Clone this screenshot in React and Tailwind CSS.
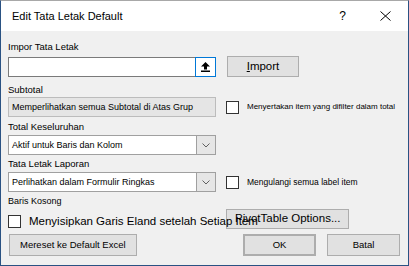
const Label = ({ children, className = "" }) => (
  <div className={`leading-[12px] text-[9.5px] ${className}`}>{children}</div>
);

const Checkbox = ({ className = "" }) => (
  <div className={`w-[13px] h-[13px] shrink-0 border border-[#333333] bg-white ${className}`} />
);

const Chevron = () => (
  <svg width="8" height="5" viewBox="0 0 8 5" fill="none">
    <path d="M0.5 0.5 L4 4 L7.5 0.5" stroke="#606060" strokeWidth="1" />
  </svg>
);

const Combo = ({ text, disabled }) => (
  <div
    className={`flex h-[20px] w-[208px] border ${
      disabled ? "border-[#bcbcbc] bg-[#e5e5e5]" : "border-[#a0a0a0] bg-white"
    }`}
  >
    <div className="flex-1 pl-[3px] flex items-center text-[9px] leading-none whitespace-nowrap overflow-hidden">
      {text}
    </div>
    <div
      className={`w-[19px] flex items-center justify-center ${
        disabled ? "bg-[#e5e5e5]" : "bg-[#e6e6e6] border-l border-[#a0a0a0]"
      }`}
    >
      {!disabled && <Chevron />}
    </div>
  </div>
);

const Button = ({ children, className = "" }) => (
  <button
    className={`bg-[#e1e1e1] border border-[#adadad] flex items-center justify-center leading-none text-black ${className}`}
  >
    {children}
  </button>
);

export default function App() {
  return (
    <div
      className="w-[409px] h-[266px] border border-[#2a5283] border-t-[#a8a8a8] bg-[#f0f0f0] flex flex-col text-black"
      style={{ fontFamily: '"Liberation Sans", Arial, sans-serif' }}
    >
      {/* title bar */}
      <div className="h-[30px] bg-white flex items-center pl-[11px]">
        <span className="text-[11px] leading-none">Edit Tata Letak Default</span>
        <span className="ml-auto text-[12px] leading-none mr-[34px]">?</span>
        <svg width="11" height="10" viewBox="0 0 11 10" className="mr-[17px]">
          <path d="M0.5 0.5 L10.5 9.5 M10.5 0.5 L0.5 9.5" stroke="#000" strokeWidth="1" />
        </svg>
      </div>

      {/* body */}
      <div className="flex flex-col pl-[7px]">
        <Label className="h-[26px] pt-[10px]">Impor Tata Letak</Label>
        <div className="flex items-start h-[20px]">
          <div className="flex w-[208px] h-[20px]">
            <div className="flex-1 bg-white border border-[#7a7a7a] border-r-0" />
            <div className="w-[21px] bg-white border border-[#0078d7] flex items-center justify-center">
              <svg width="9" height="10" viewBox="0 0 9 10">
                <path d="M4.5 0 L9 4.5 L6 4.5 L6 7.5 L3 7.5 L3 4.5 L0 4.5 Z" fill="#000" />
                <rect x="0" y="8.5" width="9" height="1.5" fill="#000" />
              </svg>
            </div>
          </div>
          <Button className="ml-[11px] -mt-px w-[72px] h-[21px] text-[11.5px]">
            <span className="underline">I</span>mport
          </Button>
        </div>

        <Label className="h-[20px] pt-[7px]">Subtotal</Label>
        <div className="flex items-center">
          <Combo text="Memperlihatkan semua Subtotal di Atas Grup" disabled />
          <Checkbox className="ml-[10px]" />
          <span className="ml-[8px] text-[8px] leading-none whitespace-nowrap">
            Menyertakan item yang difilter dalam total
          </span>
        </div>

        <Label className="h-[18px] pt-[4px]">Total Keseluruhan</Label>
        <Combo text="Aktif untuk Baris dan Kolom" />

        <Label className="h-[17px] pt-[3px]">Tata Letak Laporan</Label>
        <div className="flex items-center">
          <Combo text="Perlihatkan dalam Formulir Ringkas" />
          <Checkbox className="ml-[10px]" />
          <span className="ml-[8px] text-[8.5px] leading-none whitespace-nowrap">
            Mengulangi semua label item
          </span>
        </div>

        <Label className="h-[17px] pt-[3px] text-[9px]">Baris Kosong</Label>
        <div className="flex items-start h-[20px]">
          <Checkbox className="mt-[6px]" />
          <span className="relative z-10 ml-[8px] mt-[5px] w-[197px] text-[11.5px] leading-[14px] whitespace-nowrap overflow-visible">
            Menyisipkan Garis Eland setelah Setiap Item
          </span>
          <Button className="w-[123px] h-[20px] text-[11.5px] justify-start pl-[8px]">
            PivotTable Options...
          </Button>
        </div>

        <div className="flex items-start mt-[5px]">
          <Button className="ml-px w-[128px] h-[22px] text-[9.5px] justify-start pl-[10px]">
            Mereset ke Default Excel
          </Button>
          <Button className="ml-[106px] w-[73px] h-[22px] text-[9.5px] border-2 border-[#0078d7]">
            OK
          </Button>
          <Button className="ml-[11px] w-[73px] h-[22px] text-[9.5px]">Batal</Button>
        </div>
      </div>
    </div>
  );
}
